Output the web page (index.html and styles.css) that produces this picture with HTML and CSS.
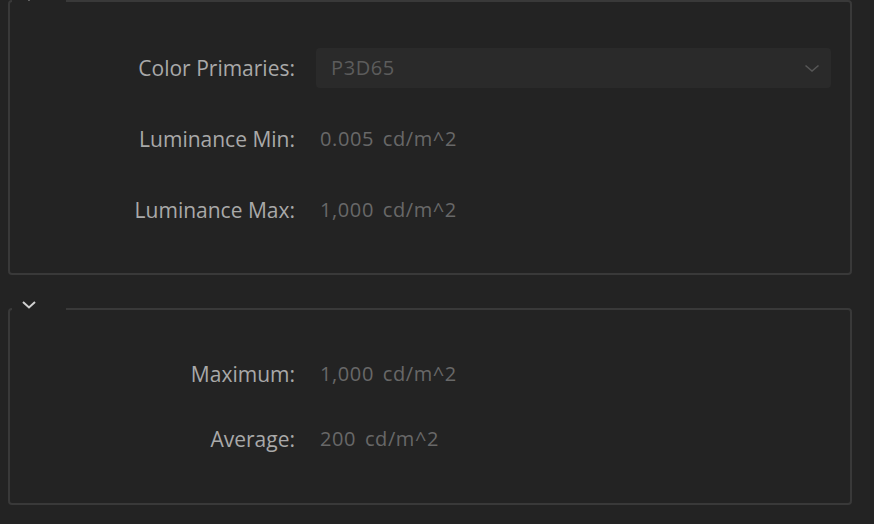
FILE: index.html
```html
<!DOCTYPE html>
<html lang="en">
<head>
<meta charset="utf-8">
<title>HDR Settings</title>
<link rel="stylesheet" href="styles.css">
</head>
<body>
  <fieldset class="panel panel-display">
    <legend class="panel-toggle">
      <svg class="chev" width="14" height="8" viewBox="0 0 14 8"><path d="M1 1 L7 6.5 L13 1" fill="none" stroke="#d0d0d0" stroke-width="2"/></svg>
    </legend>
    <div class="rows rows-display">
      <div class="label">Color Primaries:</div>
      <div class="select">
        <span class="select-text">P3D65</span>
        <svg class="select-chev" width="16" height="9" viewBox="0 0 16 9"><path d="M1.5 1.5 L8 7 L14.5 1.5" fill="none" stroke="#565656" stroke-width="1.6"/></svg>
      </div>
      <div class="label">Luminance Min:</div>
      <div class="value">0.005 cd/m^2</div>
      <div class="label">Luminance Max:</div>
      <div class="value">1,000 cd/m^2</div>
    </div>
  </fieldset>

  <fieldset class="panel panel-content">
    <legend class="panel-toggle">
      <svg class="chev" width="14" height="8" viewBox="0 0 14 8"><path d="M1 1 L7 6.5 L13 1" fill="none" stroke="#d0d0d0" stroke-width="2"/></svg>
    </legend>
    <div class="rows rows-content">
      <div class="label">Maximum:</div>
      <div class="value">1,000 cd/m^2</div>
      <div class="label">Average:</div>
      <div class="value">200 cd/m^2</div>
    </div>
  </fieldset>
</body>
</html>
```

FILE: styles.css
```css
html, body {
  margin: 0;
  padding: 0;
  background: #232323;
}

body {
  font-family: "Open Sans", Lato, sans-serif;
  font-size: 21px;
  overflow: hidden;
}

.panel {
  margin: 0 22px 0 8px;
  padding: 0;
  min-inline-size: 0;
  border: 2px solid #393939;
  border-radius: 4px;
}

.panel-display {
  margin-top: -7px;
  padding: 39px 0 43px 0;
}

.panel-content {
  margin-top: 26px;
  padding: 37px 0 44px 0;
}

.panel-toggle {
  margin-left: 2px;
  padding: 0 0 0 10px;
  width: 44px;
  height: 16px;
  box-sizing: content-box;
  line-height: 0;
}

.chev {
  display: block;
}

.rows {
  display: grid;
  grid-template-columns: 285px 515px;
  column-gap: 21px;
  grid-auto-rows: 40px;
  align-items: center;
  line-height: 1;
}

.rows-display {
  row-gap: 31px;
}

.rows-content {
  row-gap: 25px;
}

.label {
  text-align: right;
  color: #a9a9a9;
}

.value {
  padding-left: 4px;
  color: #686868;
  font-size: 20px;
  letter-spacing: 0.6px;
  word-spacing: 3px;
}

.select {
  height: 40px;
  background: #2a2a2a;
  border-radius: 4px;
  display: flex;
  align-items: center;
  justify-content: space-between;
  padding: 0 11px 0 15px;
}

.select-text {
  color: #5c5c5c;
  font-size: 20px;
  letter-spacing: 0.6px;
}

.select-chev {
  display: block;
}
```
